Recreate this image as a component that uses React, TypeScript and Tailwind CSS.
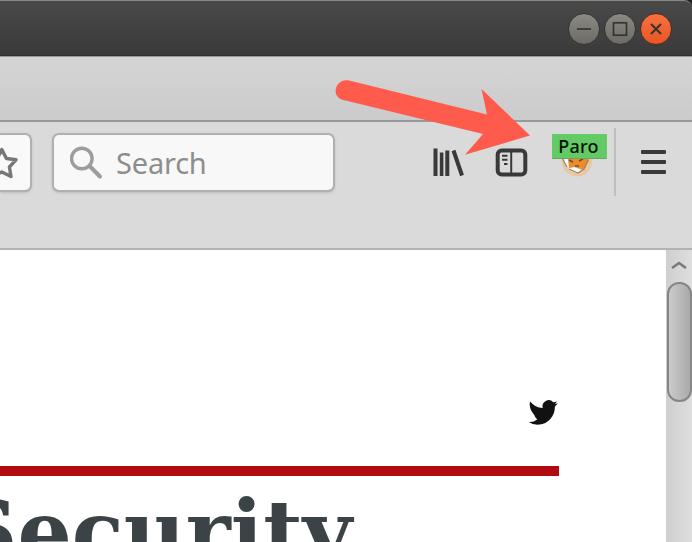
import React from "react";

function WindowButton({ kind }: { kind: "minimize" | "maximize" | "close" }) {
  const tone =
    kind === "close"
      ? "from-[#f8713f] to-[#ea5523] border-[#4c2f25]"
      : "from-[#8b8983] to-[#6d6b66] border-[#35342f]";
  return (
    <div className={`flex size-8 items-center justify-center rounded-full border bg-linear-to-b ${tone}`}>
      <svg width="30" height="30" viewBox="0 0 30 30" fill="none" stroke="#37342f" strokeWidth="1.7">
        {kind === "minimize" && <path d="M8 15H22" />}
        {kind === "maximize" && <rect x="8.5" y="8.8" width="13" height="12.4" />}
        {kind === "close" && <path d="M10 10L20 20M20 10L10 20" strokeWidth="2" />}
      </svg>
    </div>
  );
}

function TitleBar() {
  return (
    <div className="h-14 shrink-0 bg-[#222]">
      <div className="flex h-14 items-center justify-end gap-1 rounded-tr-lg border-t border-b border-t-[#858981] border-b-[#303030] bg-linear-to-b from-[#494949] to-[#3a3a3a] pr-5 pt-[2px]">
        <WindowButton kind="minimize" />
        <WindowButton kind="maximize" />
        <WindowButton kind="close" />
      </div>
    </div>
  );
}

function Toolbar() {
  return (
    <div className="flex h-32 shrink-0 items-start border-b-2 border-[#b2b2b2] bg-[#dadada]">
      <div className="mt-[11px] flex h-[59px] w-8 shrink-0 items-center overflow-hidden rounded-r-[7px] border-2 border-l-0 border-[#b0b0b0] bg-[#f9f9f9] shadow-sm">
        <svg width="20" height="36" viewBox="0 0 20 36" fill="none" stroke="#777" strokeWidth="3.4" strokeLinejoin="round">
          <path d="M-13 15L-3 13.8L1.8 4.5L6.4 13.5L16 14.8L9.4 22L11 31.5L1.8 27L-8 31.5L-6 22Z" />
        </svg>
      </div>
      <div className="ml-5 mt-[11px] flex h-[59px] w-[283px] shrink-0 items-center rounded-[7px] border-2 border-[#b0b0b0] bg-[#f8f8f8] pl-4 shadow-sm">
        <svg width="34" height="34" viewBox="0 0 34 34" fill="none" stroke="#9c9c9c" strokeLinecap="round">
          <circle cx="11.8" cy="12.5" r="10.3" strokeWidth="3.4" />
          <path d="M20 20.5L30 30.5" strokeWidth="4" />
        </svg>
        <span className="ml-3 font-['Noto_Sans',sans-serif] text-[29px] leading-10 tracking-[-0.2px] text-[#8d8d8d]">Search</span>
      </div>
      <svg className="ml-[97px] mt-[26px] shrink-0" width="32" height="30" viewBox="0 0 32 30" fill="none" stroke="#393939" strokeWidth="4" strokeLinejoin="round">
        <path d="M3.5 0.5V28M15.3 2.5V28" />
        <path d="M9.6 4.5V28" strokeWidth="3.6" />
        <path d="M21.5 2.5L30 27.5" />
      </svg>
      <svg className="ml-[30px] mt-[24px] shrink-0" width="34" height="32" viewBox="0 0 34 32" fill="none" stroke="#393939">
        <rect x="3.7" y="4.5" width="27.6" height="24" rx="4" strokeWidth="4" />
        <path d="M17.2 4V29" strokeWidth="2" />
        <path d="M8 9.7H13.5M8 13.7H13.5M10 17.9H13.5" strokeWidth="2" />
      </svg>
      <div className="relative ml-6 mt-3 h-12 w-14 shrink-0">
        <svg className="absolute left-2 top-3" width="38" height="34" viewBox="0 0 38 34">
          <circle cx="17" cy="15.5" r="15" fill="#ecc69d" />
          <circle cx="16.5" cy="14" r="12.8" fill="#d9d3c8" />
          <path d="M4 9L8 14L9 22L5 18Z" fill="#fff" />
          <path d="M8 10H28L29 15L24 24L15 21L9 22Z" fill="#f58a25" />
          <path d="M8 23L14 21L21 24L17 27Z" fill="#fffdf8" />
          <path d="M9 14L13 16M19 15L23 13M15 20L19 20" stroke="#5d5144" strokeWidth="1.5" fill="none" />
          <path d="M2 12L7 21M28 14L24 23L18 27L9 23" stroke="#9a8870" strokeWidth="1.3" fill="none" />
        </svg>
        <div className="absolute left-0 top-0 flex h-[25px] w-[55px] justify-center border border-[#64cb68] border-b-[#65a865] bg-[#62cb66] pr-0.5 font-['Noto_Sans',sans-serif] text-[18px] font-medium leading-[22px] tracking-[0.3px] text-[#07100a]">Paro</div>
      </div>
      <div className="ml-[6px] mt-1.5 h-[68px] w-0.5 shrink-0 bg-[#bebebe]" />
      <div className="ml-[25px] mt-[28px] flex w-[25px] shrink-0 flex-col gap-1.5">
        <div className="h-1 rounded-[1px] bg-[#393939]" />
        <div className="h-1 rounded-[1px] bg-[#393939]" />
        <div className="h-1 rounded-[1px] bg-[#393939]" />
      </div>
    </div>
  );
}

function Scrollbar() {
  return (
    <div className="flex w-[26px] shrink-0 flex-col items-center bg-linear-to-r from-[#cfcfcf] to-[#dedede]">
      <svg width="26" height="32" viewBox="0 0 26 32" fill="none" stroke="#797979" strokeWidth="2.5">
        <path d="M6 18L13 13L20 18" />
      </svg>
      <div className="h-[120px] w-[25px] rounded-xl border-2 border-[#858585] bg-linear-to-r from-[#cbcbcb] to-[#aaaaaa]" />
    </div>
  );
}

function Annotation() {
  return (
    <svg className="pointer-events-none absolute left-[330px] top-[70px]" width="210" height="100" viewBox="330 70 210 100" fill="#ff5b4c">
      <path d="M349 80.5L487 114.5L481.5 89L530 135.5L465 154.8L483 134L342.5 99.8C330 96 336 77.5 349 80.5Z" />
    </svg>
  );
}

export default function App() {
  return (
    <div className="relative flex h-[542px] w-[692px] flex-col overflow-hidden bg-white">
      <TitleBar />
      <div className="h-[66px] shrink-0 border-b-2 border-t border-b-[#999] border-t-[#999] bg-linear-to-b from-[#d5d5d5] to-[#cbcbcb]" />
      <Toolbar />
      <div className="flex min-h-0 flex-1">
        <main className="flex min-w-0 flex-1 flex-col overflow-hidden">
          <div className="flex h-[216px] w-[560px] shrink-0 items-end justify-end pb-10">
            <svg className="mr-0.5" width="30" height="27" viewBox="0 0 24 20" fill="#111">
              <path d="M7.5 19.7c9.1 0 14-7.5 14-14v-.6A10 10 0 0 0 23.8 2.5a10 10 0 0 1-2.6.8A5 5 0 0 0 23 .9a10 10 0 0 1-2.8.9 4.9 4.9 0 0 0-8.4 4.5A14 14 0 0 1 1.7 1.1c-1 3 .1 7.5 3.3 10.9q.5 2 2.4 3.5A10 10 0 0 1 .5 17.5a14 14 0 0 0 7 2.2" />
            </svg>
          </div>
          <div className="h-2.5 w-[559px] shrink-0 bg-[#af0b10]" />
          <h1 className="-ml-11 mt-1.5 whitespace-nowrap font-['DejaVu_Serif',serif] text-[85.3px] font-bold leading-[100px] text-[#3c4347]">Security</h1>
        </main>
        <Scrollbar />
      </div>
      <Annotation />
    </div>
  );
}
